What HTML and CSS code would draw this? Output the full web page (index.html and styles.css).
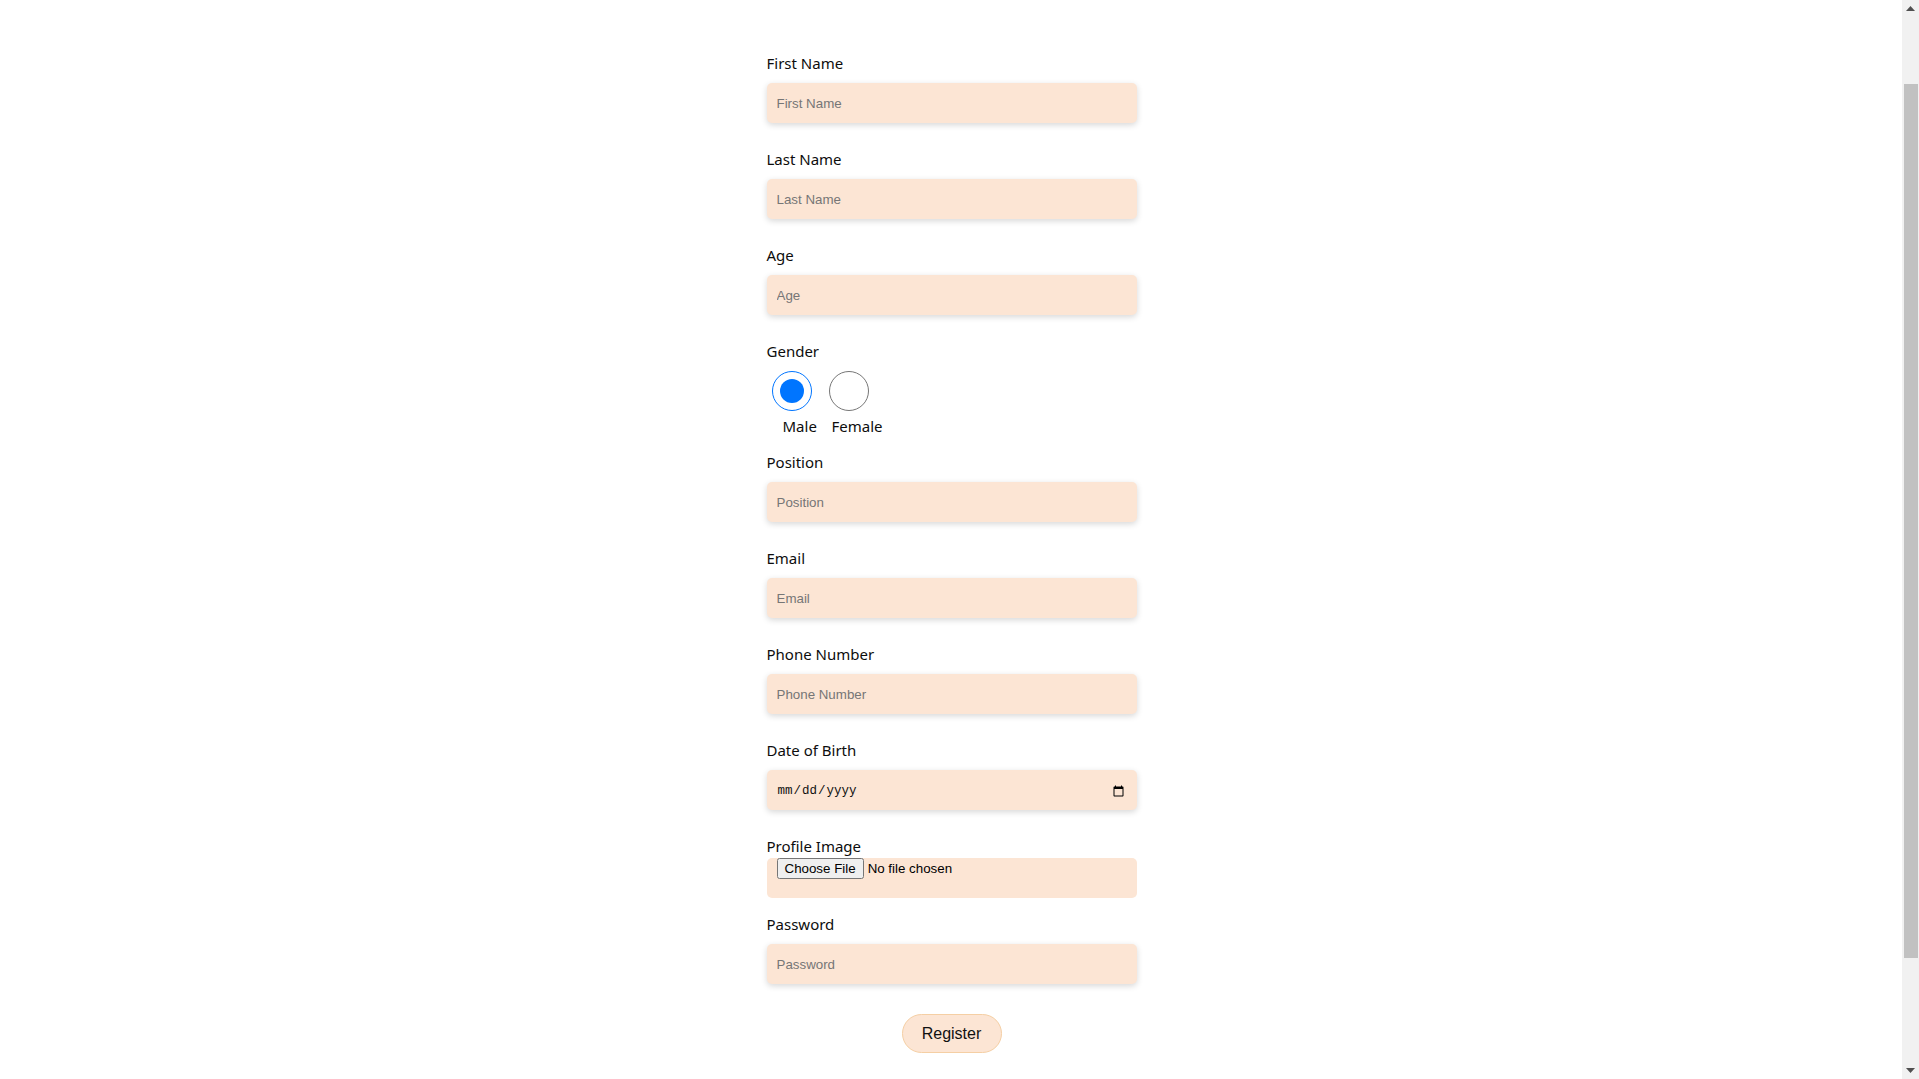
FILE: index.html
```html
<!DOCTYPE html>
<html lang="en">
<head>
<meta charset="utf-8">
<title>Register</title>
<link rel="stylesheet" href="styles.css">
</head>
<body>
<form class="form">
  <div class="group">
    <label class="label" for="fn">First Name</label>
    <input class="field" id="fn" type="text" placeholder="First Name">
  </div>
  <div class="group">
    <label class="label" for="ln">Last Name</label>
    <input class="field" id="ln" type="text" placeholder="Last Name">
  </div>
  <div class="group">
    <label class="label" for="age">Age</label>
    <input class="field" id="age" type="number" placeholder="Age">
  </div>
  <div class="group gender">
    <span class="label">Gender</span>
    <div class="options">
      <div class="opt opt-male">
        <input class="radio" type="radio" name="g" id="male" checked>
        <label class="opt-label" for="male">Male</label>
      </div>
      <div class="opt opt-female">
        <input class="radio" type="radio" name="g" id="female">
        <label class="opt-label" for="female">Female</label>
      </div>
    </div>
  </div>
  <div class="group">
    <label class="label" for="pos">Position</label>
    <input class="field" id="pos" type="text" placeholder="Position">
  </div>
  <div class="group">
    <label class="label" for="em">Email</label>
    <input class="field" id="em" type="email" placeholder="Email">
  </div>
  <div class="group">
    <label class="label" for="ph">Phone Number</label>
    <input class="field" id="ph" type="tel" placeholder="Phone Number">
  </div>
  <div class="group">
    <label class="label" for="dob">Date of Birth</label>
    <input class="field date" id="dob" type="date">
  </div>
  <div class="group file-group">
    <label class="label" for="img">Profile Image</label>
    <input class="file" id="img" type="file">
  </div>
  <div class="group">
    <label class="label" for="pw">Password</label>
    <input class="field" id="pw" type="password" placeholder="Password">
  </div>
  <button class="btn" type="button">Register</button>
</form>
<div class="scrollbar" aria-hidden="true">
  <div class="sb-btn sb-up">
    <svg width="9" height="5" viewBox="0 0 9 5"><path d="M4.5 0 L9 5 L0 5 Z" fill="#505050"/></svg>
  </div>
  <div class="sb-track">
    <div class="sb-thumb"></div>
  </div>
  <div class="sb-btn sb-down">
    <svg width="9" height="5" viewBox="0 0 9 5"><path d="M0 0 L9 0 L4.5 5 Z" fill="#505050"/></svg>
  </div>
</div>
<script src="script.js"></script>
</body>
</html>
```
FILE: styles.css
```css
html, body {
  margin: 0;
  padding: 0;
  background: #ffffff;
}
body {
  font-family: "Noto Sans", "Open Sans", sans-serif;
  color: #111;
  padding-left: 1px;
  padding-right: 17px;
}
.form {
  width: 370px;
  margin: 0 auto;
  padding: 134px 0 155px;
  display: flex;
  flex-direction: column;
}
.group {
  display: flex;
  flex-direction: column;
  margin-bottom: 24px;
}
.label {
  display: block;
  font-size: 15px;
  line-height: 24px;
  height: 24px;
  margin-bottom: 8px;
  color: #0d0d0d;
}
.field {
  box-sizing: border-box;
  width: 100%;
  height: 40px;
  margin: 0;
  border: none;
  border-radius: 5px;
  padding: 0 10px;
  background: #fce5d4;
  box-shadow: 0 2px 6px rgba(0, 0, 0, 0.16);
  font-family: Arial, "Liberation Sans", sans-serif;
  font-size: 13.333px;
  color: #111;
  outline: none;
}
.field::placeholder {
  color: #767676;
}
.date {
  font-family: "Liberation Mono", "DejaVu Sans Mono", monospace;
  font-size: 12.5px;
  padding-top: 2px;
  color: #111;
}
.gender {
  margin-bottom: 12px;
}
.gender .label {
  margin-bottom: 8px;
}
.options {
  display: flex;
}
.opt {
  display: flex;
  flex-direction: column;
  align-items: flex-start;
}
.opt-male {
  width: 57px;
}
.radio {
  width: 40px;
  height: 40px;
  margin: 0 0 0 5px;
}
.opt-label {
  margin-top: 3px;
  font-size: 15px;
  line-height: 24px;
  color: #0d0d0d;
}
.opt-male .opt-label {
  margin-left: 16px;
}
.opt-female .opt-label {
  margin-left: 8px;
}
.file-group {
  margin-bottom: 14px;
}
.file-group .label {
  margin-bottom: 0;
}
.file {
  box-sizing: border-box;
  width: 100%;
  height: 40px;
  margin: 0;
  padding: 0 10px;
  border: none;
  border-radius: 5px;
  background: #fce5d4;
  font-family: Arial, "Liberation Sans", sans-serif;
  font-size: 13.333px;
  color: #000;
}
.btn {
  align-self: center;
  margin-top: 6px;
  box-sizing: border-box;
  width: 100px;
  height: 39px;
  border: 1px solid #f5cfa4;
  border-radius: 20px;
  background: #fce5d4;
  font-family: Arial, "Liberation Sans", sans-serif;
  font-size: 16px;
  color: #111;
  cursor: pointer;
}
.scrollbar {
  position: fixed;
  top: 0;
  right: 0;
  width: 17px;
  height: 100vh;
  background: #f1f1f1;
  display: flex;
  flex-direction: column;
}
.sb-btn {
  height: 17px;
  display: flex;
  align-items: center;
  justify-content: center;
  flex: none;
}
.sb-track {
  flex: 1;
  padding-top: 67px;
}
.sb-thumb {
  margin: 0 1px 0 2px;
  height: 874px;
  background: #c1c1c1;
}
```
FILE: script.js
```js
window.scrollTo(0, 83);
```
